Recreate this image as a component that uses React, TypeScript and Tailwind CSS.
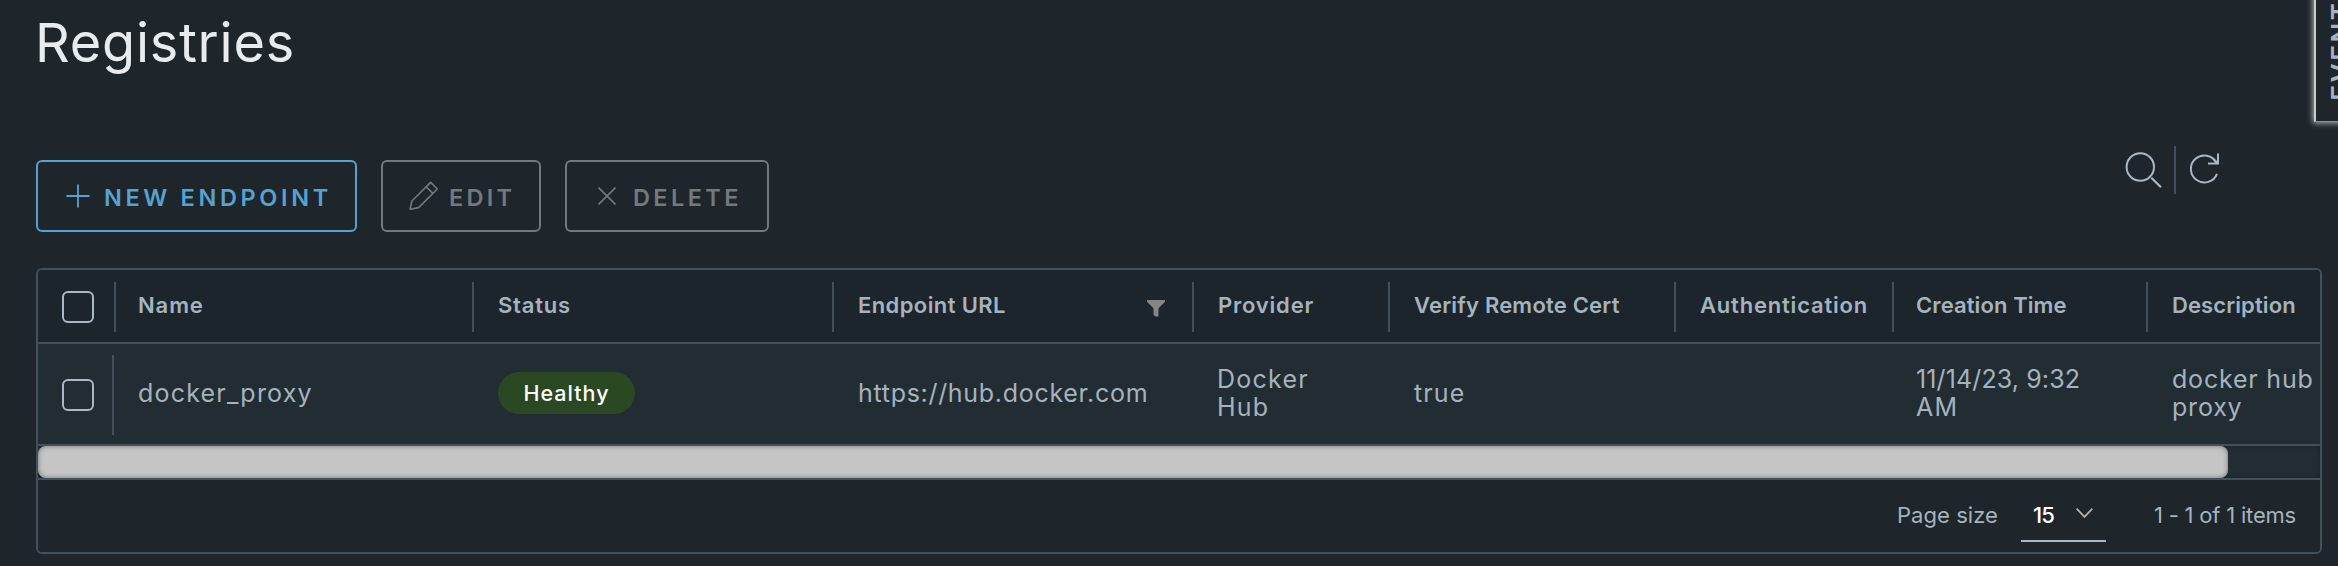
import type { ReactNode } from "react";

function PlusIcon() {
  return (
    <svg className="h-[24px] w-[24px]" viewBox="0 0 24 24" fill="none" stroke="currentColor" strokeWidth="1.8">
      <path d="M12 0.5v23M0.5 12h23" />
    </svg>
  );
}

function PencilIcon() {
  return (
    <svg className="h-[30px] w-[30px]" viewBox="0 0 30 30" fill="none" stroke="currentColor" strokeWidth="1.6" strokeLinejoin="round">
      <path d="M21.6 1.4 28.3 8 9.6 26.6 1.1 28.2 2.9 20Z" />
      <path d="M17.2 5.8l6.7 6.6" />
    </svg>
  );
}

function CloseIcon() {
  return (
    <svg className="h-[18px] w-[18px]" viewBox="0 0 18 18" fill="none" stroke="currentColor" strokeWidth="1.6">
      <path d="M0.5 0.5l17 17M17.5 0.5l-17 17" />
    </svg>
  );
}

function ActionButton({
  icon,
  label,
  className,
  labelClass,
}: {
  icon: ReactNode;
  label: string;
  className: string;
  labelClass: string;
}) {
  return (
    <button type="button" className={`flex h-[72px] items-center rounded-md border-2 ${className}`}>
      {icon}
      <span className={`whitespace-nowrap pt-[3px] text-[23.5px] leading-8 ${labelClass}`}>{label}</span>
    </button>
  );
}

function Checkbox({ label }: { label: string }) {
  return (
    <span
      role="checkbox"
      aria-checked="false"
      aria-label={label}
      className="block h-8 w-8 rounded-[6px] border-2 border-[#a9b8c4]"
    />
  );
}

function HeaderCell({ width, children, text }: { width: string; text: string; children?: ReactNode }) {
  return (
    <div className={`flex shrink-0 items-center ${width}`}>
      <span className="mb-[-2px] h-[50px] w-0.5 shrink-0 self-center bg-[#42505c]" />
      <span className={`whitespace-nowrap pb-[2px] ${text}`}>{children}</span>
    </div>
  );
}

export default function App() {
  return (
    <div className="relative h-[566px] w-full overflow-hidden bg-[#1e262c] pl-9 pr-4 font-['Inter',sans-serif] text-[#a5b3be]">
      <h1 className="-ml-[1px] pt-[13px] text-[54px] font-[370] leading-[60px] tracking-[0.8px] text-[#e9ecef]">
        Registries
      </h1>

      <div className="mt-[71px] flex h-[88px] items-start">
        <div className="flex gap-6 pt-4">
          <ActionButton
            icon={<PlusIcon />}
            label="NEW ENDPOINT"
            className="w-[321px] border-[#56a2d0] pl-7 text-[#56a2d0]"
            labelClass="pl-[14px] font-[580] tracking-[3.65px]"
          />
          <ActionButton
            icon={<PencilIcon />}
            label="EDIT"
            className="w-[160px] border-[#737a7d] pl-[26px] text-[#737a7d]"
            labelClass="pl-[10px] font-semibold tracking-[3.3px]"
          />
          <ActionButton
            icon={<CloseIcon />}
            label="DELETE"
            className="w-[204px] border-[#737a7d] pl-[31px] text-[#737a7d]"
            labelClass="pl-[17px] font-semibold tracking-[3.4px]"
          />
        </div>
        <div className="ml-auto mr-[102px] flex items-start text-[#a9b8c4]">
          <svg className="mt-[7px] h-[38px] w-[38px]" viewBox="0 0 38 38" fill="none" stroke="currentColor" strokeWidth="2">
            <circle cx="16.3" cy="16" r="13.7" />
            <path d="M27.3 26.8 37 36.3" strokeWidth="2.2" />
          </svg>
          <span className="ml-[12px] mt-[2px] h-12 w-0.5 bg-[#42505c]" />
          <svg className="ml-[14px] mt-[9px] h-[32px] w-[30px]" viewBox="0 0 30 32" fill="none" stroke="currentColor" strokeWidth="2">
            <path d="M27 20.8A13.5 13.5 0 1 1 26.4 9.8" />
            <path d="M28 0.6v9.8H18" />
            <path d="M23.6 6.2l3.6 3.6" strokeWidth="2" />
          </svg>
        </div>
      </div>

      <section className="mt-[36px] h-[286px] w-[2286px] overflow-hidden rounded-md border-2 border-[#42505c]">
        <div className="flex h-[74px] items-stretch border-b-2 border-[#42505c] bg-[#1d252c] text-[22px] font-semibold leading-7">
          <div className="flex w-[76px] shrink-0 items-center pl-6 pt-[2px]">
            <Checkbox label="Select all" />
          </div>
          <HeaderCell width="w-[358px]" text="pl-[22px] tracking-[0.9px]">Name</HeaderCell>
          <HeaderCell width="w-[360px]" text="pl-[24px] tracking-[0.8px]">Status</HeaderCell>
          <div className="flex w-[360px] shrink-0 items-center">
            <span className="mb-[-2px] h-[50px] w-0.5 bg-[#42505c]" />
            <span className="whitespace-nowrap pb-[2px] pl-[24px] tracking-[0.4px]">Endpoint URL</span>
            <svg className="ml-auto mr-[27px] mt-[5px] h-[17px] w-[18px]" viewBox="0 0 18 17" fill="#858585">
              <path d="M0 0h18v1.8L11.5 8.2v8.3H8.7L6.5 15V8.2L0 1.8Z" />
            </svg>
          </div>
          <HeaderCell width="w-[196px]" text="pl-[24px] tracking-[0.8px]">Provider</HeaderCell>
          <HeaderCell width="w-[286px]" text="pl-[24px] tracking-[0.2px]">Verify Remote Cert</HeaderCell>
          <HeaderCell width="w-[218px]" text="pl-[24px] tracking-[0.8px]">Authentication</HeaderCell>
          <HeaderCell width="w-[254px]" text="pl-[22px] tracking-[0.1px]">Creation Time</HeaderCell>
          <HeaderCell width="w-[174px]" text="pl-[24px] tracking-[0.1px]">Description</HeaderCell>
        </div>

        <div className="flex h-[102px] items-center border-b-2 border-[#42505c] bg-[#222d33] text-[25px] leading-7">
          <div className="flex w-[76px] shrink-0 items-center pl-6 pt-[2px]">
            <Checkbox label="Select docker_proxy" />
            <span className="ml-[18px] h-20 w-0.5 shrink-0 bg-[#42505c]" />
          </div>
          <div className="w-[358px] shrink-0 pb-[3px] pl-[24px] tracking-[1.2px]">docker_proxy</div>
          <div className="w-[360px] shrink-0 pb-[2px] pl-[26px]">
            <span className="flex h-[42px] w-[137px] items-center justify-center rounded-full bg-[#2a4922] text-[21.5px] font-medium tracking-[1px] text-white">
              Healthy
            </span>
          </div>
          <div className="w-[360px] shrink-0 pb-[3px] pl-[26px] tracking-[0.7px]">https://hub.docker.com</div>
          <div className="w-[196px] shrink-0 pb-[2px] pl-[25px] tracking-[1.25px]">
            Docker
            <br />
            Hub
          </div>
          <div className="w-[286px] shrink-0 pb-[3px] pl-[26px] tracking-[1.1px]">true</div>
          <div className="w-[218px] shrink-0" />
          <div className="w-[254px] shrink-0 pb-[2px] pl-[24px]">
            <span className="tracking-[0.12px]">11/14/23, 9:32</span>
            <br />
            <span className="tracking-[1.2px]">AM</span>
          </div>
          <div className="w-[174px] shrink-0 whitespace-nowrap pb-[2px] pl-[26px] tracking-[0.8px]">
            docker hub
            <br />
            proxy
          </div>
        </div>

        <div className="h-[34px] border-b-2 border-[#42505c] bg-[#1d252c]">
          <div className="h-8 rounded-lg bg-[#222d33] shadow-[inset_0_0_5px_#1b242a]">
            <div className="h-8 w-[2190px] rounded-lg bg-[#c5c5c5] shadow-[inset_0_0_5px_#707070]" />
          </div>
        </div>

        <footer className="flex h-[72px] items-center justify-end bg-[#1e262c] pr-[24px] text-[22px] leading-7">
          <span className="pb-[2px] tracking-[0.05px]">Page size</span>
          <div className="ml-[23px] mt-[9px] flex h-[43px] w-[85px] items-center border-b-2 border-[#a9b8c4] pb-[10px] pl-[12px] text-white">
            <span className="w-[43px] font-medium tracking-[-0.8px]">15</span>
            <svg className="mb-[3px] h-[10px] w-[17px]" viewBox="0 0 17 10" fill="none" stroke="#b8aeaa" strokeWidth="1.8">
              <path d="M0.6 0.7 8.5 8.9 16.4 0.7" />
            </svg>
          </div>
          <span className="ml-[48px] pb-[2px] tracking-[-0.2px]">1 - 1 of 1 items</span>
        </footer>
      </section>

      <aside className="absolute -top-20 left-[2314px] h-[202px] w-12 border-b border-l-2 border-b-[#8a8f92] border-l-[#cccccc] bg-[#1e262c] shadow-[0_0_6px_1px_#b5b5b5]">
        <span className="absolute bottom-[20px] left-[10px] rotate-180 whitespace-nowrap text-[26px] font-semibold leading-[30px] tracking-[2.6px] [writing-mode:vertical-rl]">
          EVENT LOG
        </span>
      </aside>
    </div>
  );
}
